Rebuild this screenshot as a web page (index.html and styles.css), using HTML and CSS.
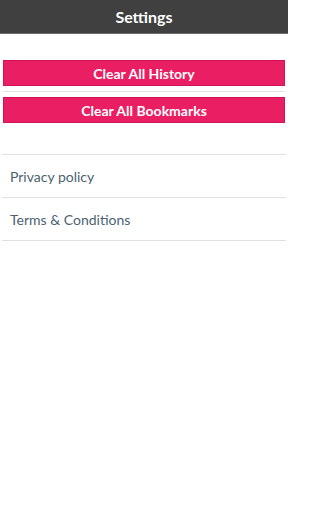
FILE: index.html
```html
<!DOCTYPE html>
<html>
<head>
<meta charset="utf-8">
<link rel="stylesheet" href="styles.css">
</head>
<body>
<div class="screen">
  <header class="topbar"><h1 class="title">Settings</h1></header>
  <main class="content">
    <div class="actions">
      <button class="btn">Clear All History</button>
      <div class="sep"></div>
      <button class="btn">Clear All Bookmarks</button>
    </div>
    <ul class="links">
      <li class="link">Privacy policy</li>
      <li class="link">Terms &amp; Conditions</li>
    </ul>
  </main>
</div>
</body>
</html>
```
FILE: styles.css
```css
html, body { margin: 0; padding: 0; background: #fff; }
body { font-family: Lato, "Noto Sans", sans-serif; }
.screen { width: 288px; min-height: 512px; }
.topbar {
  height: 33px;
  background: #404040;
  border-bottom: 1px solid #6a6a6a;
  display: flex;
  align-items: center;
  justify-content: center;
}
.title { margin: 0; color: #fff; font-size: 16px; font-weight: 700; line-height: 1; }
.content { padding: 26px 2px 0 2px; }
.actions { display: flex; flex-direction: column; padding: 0 1px; }
.btn {
  height: 26px;
  margin: 0;
  padding: 0;
  background: #e91e63;
  border: 1px solid #d0145a;
  color: #fff;
  font-family: inherit;
  font-size: 14px;
  font-weight: 700;
  display: flex;
  align-items: center;
  justify-content: center;
}
.sep { height: 1px; background: #e4e4e4; margin: 5px 0 5px 0; }
.links { list-style: none; margin: 31px 0 0 0; padding: 0; border-top: 1px solid #e0e0e0; }
.link {
  height: 42px;
  border-bottom: 1px solid #e0e0e0;
  display: flex;
  align-items: center;
  padding-left: 8px;
  color: #4b6272;
  font-size: 14px;
}
```
